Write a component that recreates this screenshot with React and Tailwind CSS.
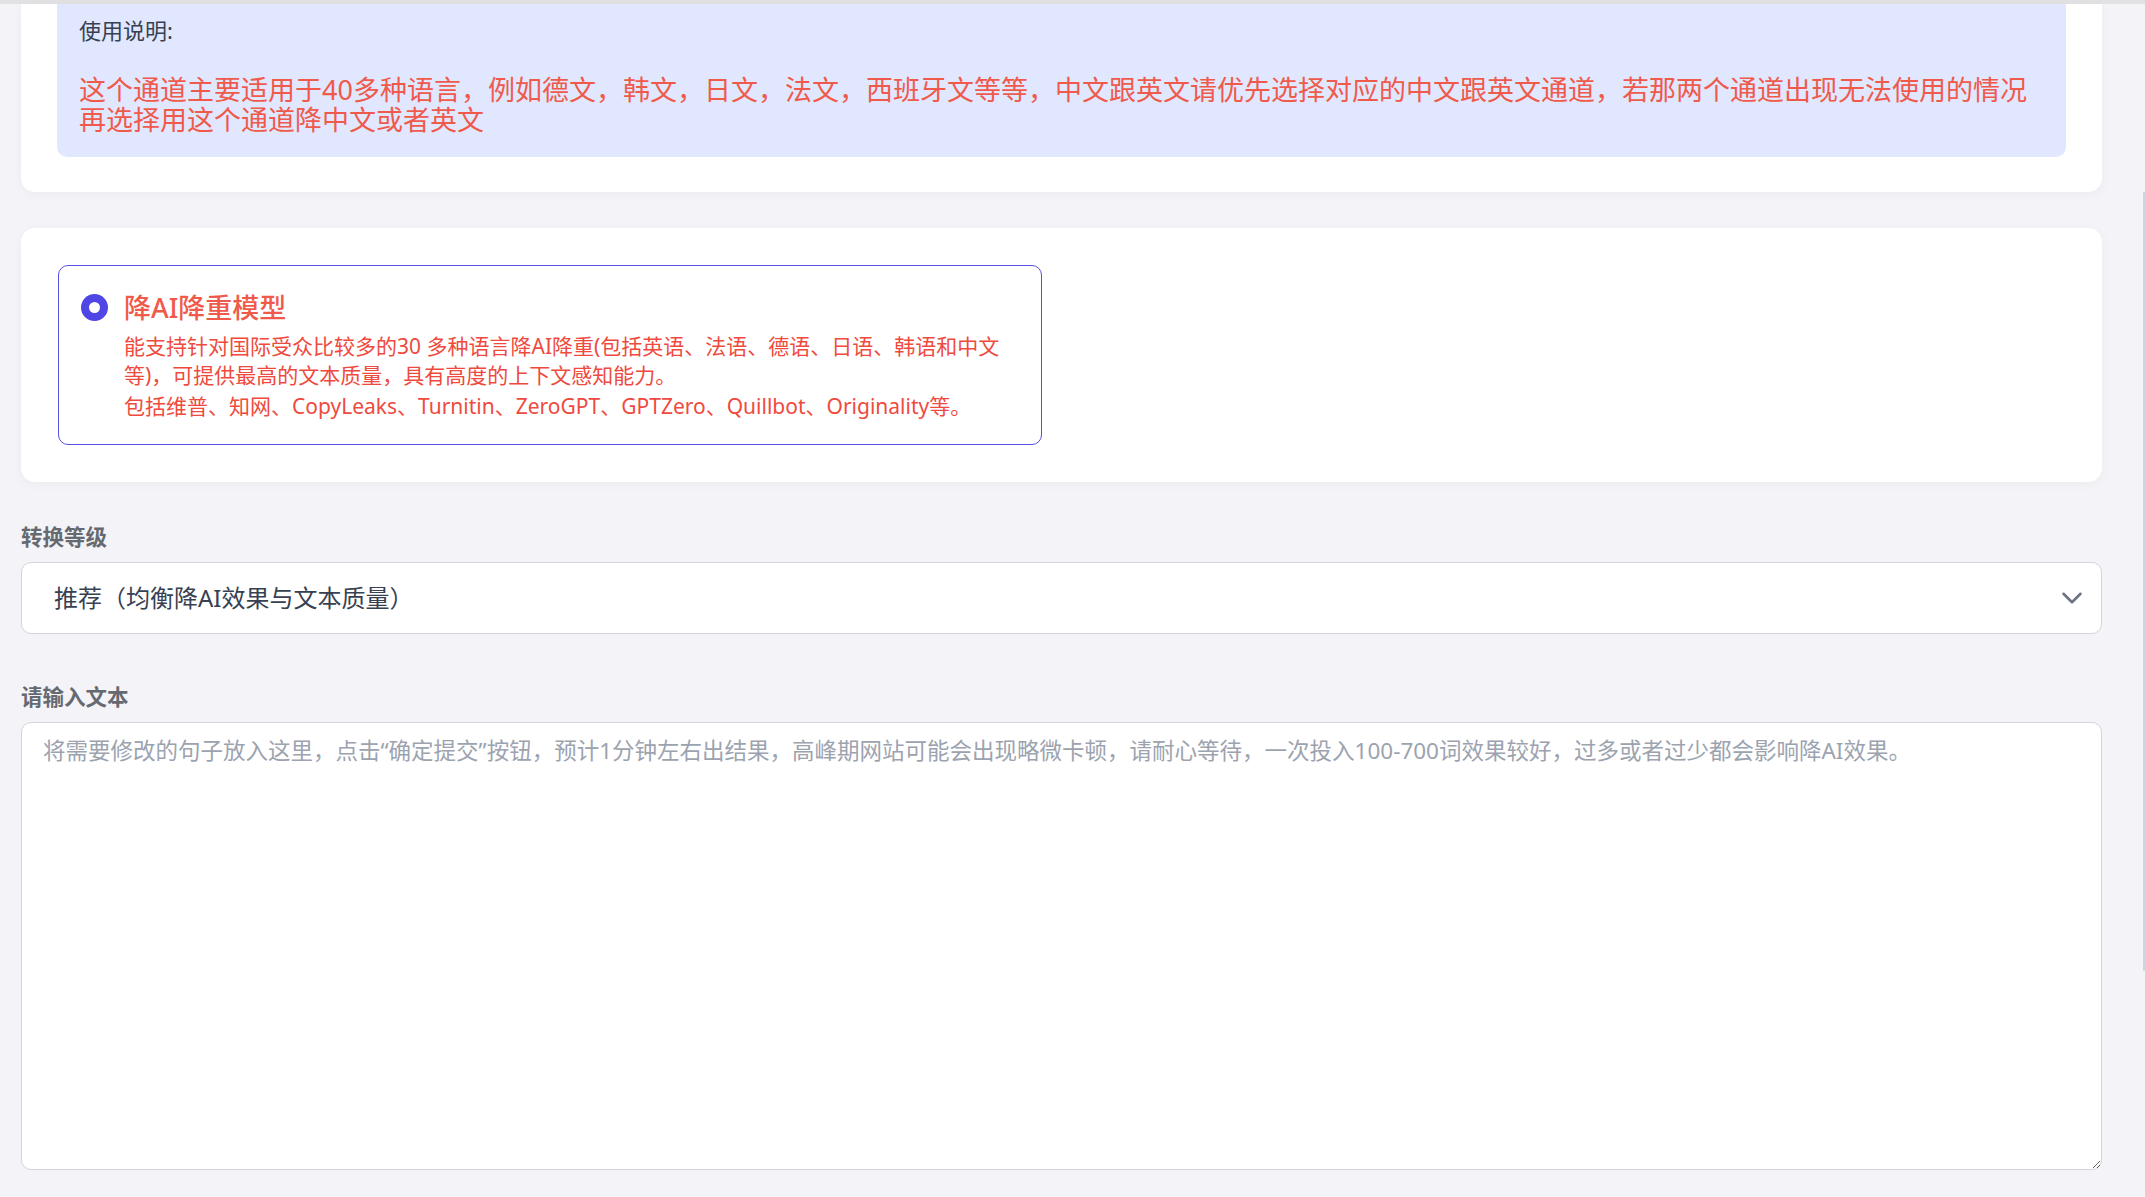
import React from "react";
import { ChevronDown } from "lucide-react";

const App = () => {
  return (
    <div className="relative min-h-screen bg-[#f3f3f8] font-[family-name:'Noto_Sans','Noto_Sans_CJK_SC',sans-serif]">
      {/* top edge of the header above */}
      <div className="h-[4px] bg-[#e2e2e5]" />

      <div className="pl-[21px] pr-[43px]">
        {/* Notice card */}
        <div className="rounded-b-[14px] bg-white px-[36px] pb-[35.5px] shadow-[0_2px_12px_rgba(0,0,0,0.04)]">
          <div className="rounded-b-[10px] bg-[#e0e7ff] px-[22px] pt-[13px] pb-[22.5px]">
            <p className="text-[22px] leading-[26px] text-[#374151]">使用说明:</p>
            <p className="mt-[32px] text-[27px] leading-[29.5px] text-[#ef5a4b]">
              这个通道主要适用于40多种语言，例如德文，韩文，日文，法文，西班牙文等等，中文跟英文请优先选择对应的中文跟英文通道，若那两个通道出现无法使用的情况再选择用这个通道降中文或者英文
            </p>
          </div>
        </div>

        {/* Model card */}
        <div className="mt-[36px] rounded-[14px] bg-white p-[37px] shadow-[0_2px_12px_rgba(0,0,0,0.04)]">
          <div className="w-[984px] rounded-[10px] border-[1.5px] border-[#5650e6] pt-[23.5px] pr-[26px] pb-[22.5px] pl-[22px]">
            <div className="flex items-center gap-[16px]">
              <span className="flex h-[27px] w-[27px] items-center justify-center rounded-full bg-[#4f46e5]">
                <span className="h-[11px] w-[11px] rounded-full bg-white" />
              </span>
              <span className="text-[27px] leading-[36px] font-medium text-[#ef5a4b]">
                降AI降重模型
              </span>
            </div>
            <div className="mt-[6.5px] pl-[43px] text-[21px] leading-[29px] text-[#ef4a3e]">
              <p>
                能支持针对国际受众比较多的30 多种语言降AI降重(包括英语、法语、德语、日语、韩语和中文等)，可提供最高的文本质量，具有高度的上下文感知能力。
              </p>
              <p className="mt-[2px]">
                包括维普、知网、CopyLeaks、Turnitin、ZeroGPT、GPTZero、Quillbot、Originality等。
              </p>
            </div>
          </div>
        </div>

        {/* Level select */}
        <p className="mt-[41px] text-[21.5px] leading-[28px] font-semibold text-[#666a70]">转换等级</p>
        <div className="mt-[11px] flex h-[72px] items-center justify-between rounded-[10px] border-[1.5px] border-[#d4d4d8] bg-white pl-[32px] pr-[12px]">
          <span className="text-[24px] text-[#374151]">推荐（均衡降AI效果与文本质量）</span>
          <ChevronDown className="h-[34px] w-[34px] text-[#6b7280]" strokeWidth={1.8} />
        </div>

        {/* Text input */}
        <p className="mt-[49px] text-[21.5px] leading-[28px] font-semibold text-[#666a70]">请输入文本</p>
        <textarea
          className="mt-[11px] block h-[448px] w-full rounded-[10px] border-[1.5px] border-[#d4d4d8] bg-white px-[21px] pt-[11px] text-[22.5px] leading-[33px] text-[#374151] outline-none placeholder:text-[#9ca3af]"
          placeholder="将需要修改的句子放入这里，点击“确定提交”按钮，预计1分钟左右出结果，高峰期网站可能会出现略微卡顿，请耐心等待，一次投入100-700词效果较好，过多或者过少都会影响降AI效果。"
        />
      </div>

      {/* scrollbar edge */}
      <div className="absolute right-0 top-[192px] h-[779px] w-[2px] bg-[#cfd6df]" />
    </div>
  );
};

export default App;
